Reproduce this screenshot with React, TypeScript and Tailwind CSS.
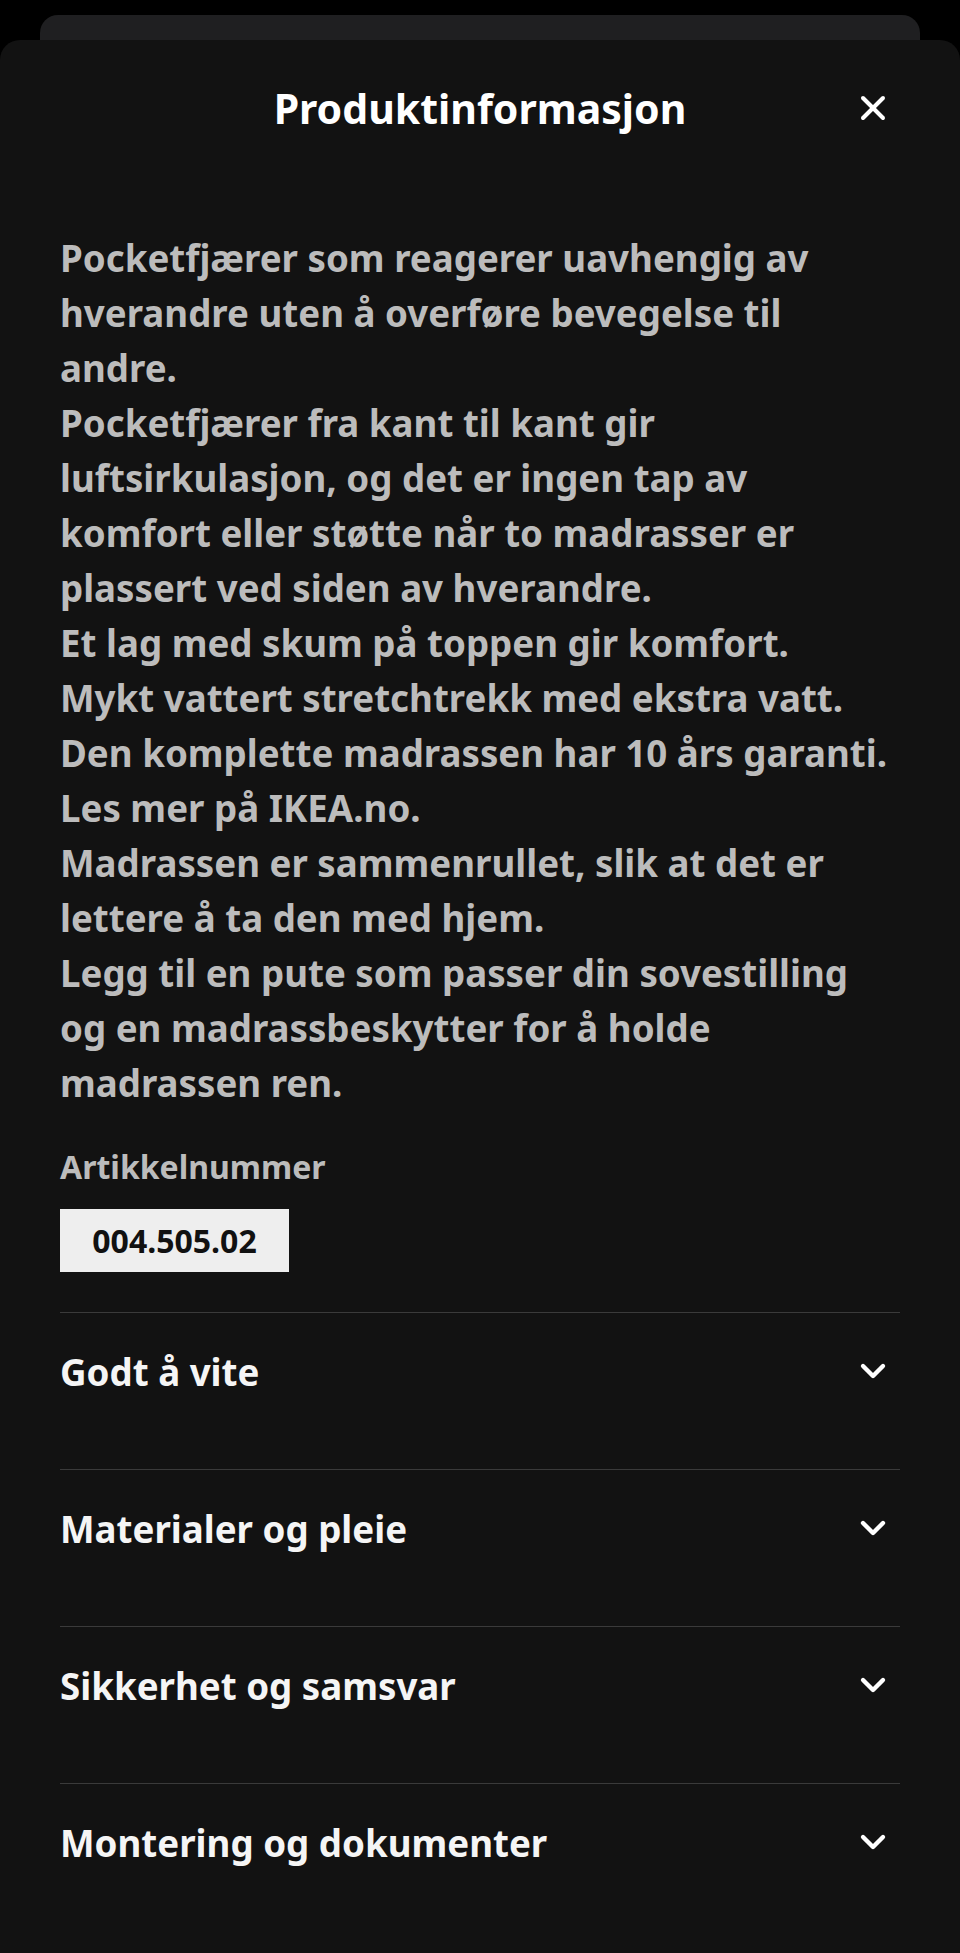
import { X, ChevronDown } from 'lucide-react'

const sections = ['Godt å vite', 'Materialer og pleie', 'Sikkerhet og samsvar', 'Montering og dokumenter']

export default function App() {
  return (
    <main
      className="min-h-[1953px] bg-black pt-[15px]"
      style={{ fontFamily: '"Noto Sans", "Open Sans", sans-serif' }}
    >
      {/* stacked sheet behind */}
      <div className="mx-[40px] h-[40px] rounded-t-[18px] bg-[#1f1f21]" />

      <div className="-mt-[15px] min-h-[1913px] rounded-t-[20px] bg-[#121212] px-[60px] pb-10">
        <div className="relative flex items-center justify-center pt-[43px]">
          <h1 className="text-[41px] font-bold leading-[50px] text-white">Produktinformasjon</h1>
          <button className="absolute right-[3px] top-[44px] flex h-[48px] w-[48px] items-center justify-center text-white">
            <X size={40} strokeWidth={2.4} />
          </button>
        </div>

        <p className="mt-[98px] text-[36.7px] font-bold leading-[55px] text-[#bcbcbc]">
          Pocketfjærer som reagerer uavhengig av hverandre uten å overføre bevegelse til andre.
          <br />
          Pocketfjærer fra kant til kant gir luftsirkulasjon, og det er ingen tap av komfort eller støtte når to
          madrasser er plassert ved siden av hverandre.
          <br />
          Et lag med skum på toppen gir komfort.
          <br />
          Mykt vattert stretchtrekk med ekstra vatt.
          <br />
          Den komplette madrassen har 10 års garanti. Les mer på IKEA.no.
          <br />
          Madrassen er sammenrullet, slik at det er lettere å ta den med hjem.
          <br />
          Legg til en pute som passer din sovestilling og en madrassbeskytter for å holde madrassen ren.
        </p>

        <h2 className="mt-[36px] text-[32px] font-bold leading-[40px] text-[#bcbcbc]">Artikkelnummer</h2>
        <div className="mt-[22px] inline-flex h-[63px] w-[229px] items-center justify-center bg-[#eeeeee] text-[32px] font-bold text-[#111111]">
          004.505.02
        </div>

        <div className="mt-[40px]">
          {sections.map((s) => (
            <div key={s} className="flex h-[157px] items-start justify-between border-t border-[#3a3a3a] pt-[35px]">
              <span className="text-[36.7px] font-bold leading-[48px] text-[#f5f5f5]">{s}</span>
              <ChevronDown size={40} strokeWidth={2.6} className="mr-[7px] mt-[3px] text-white" />
            </div>
          ))}
        </div>
      </div>
    </main>
  )
}
